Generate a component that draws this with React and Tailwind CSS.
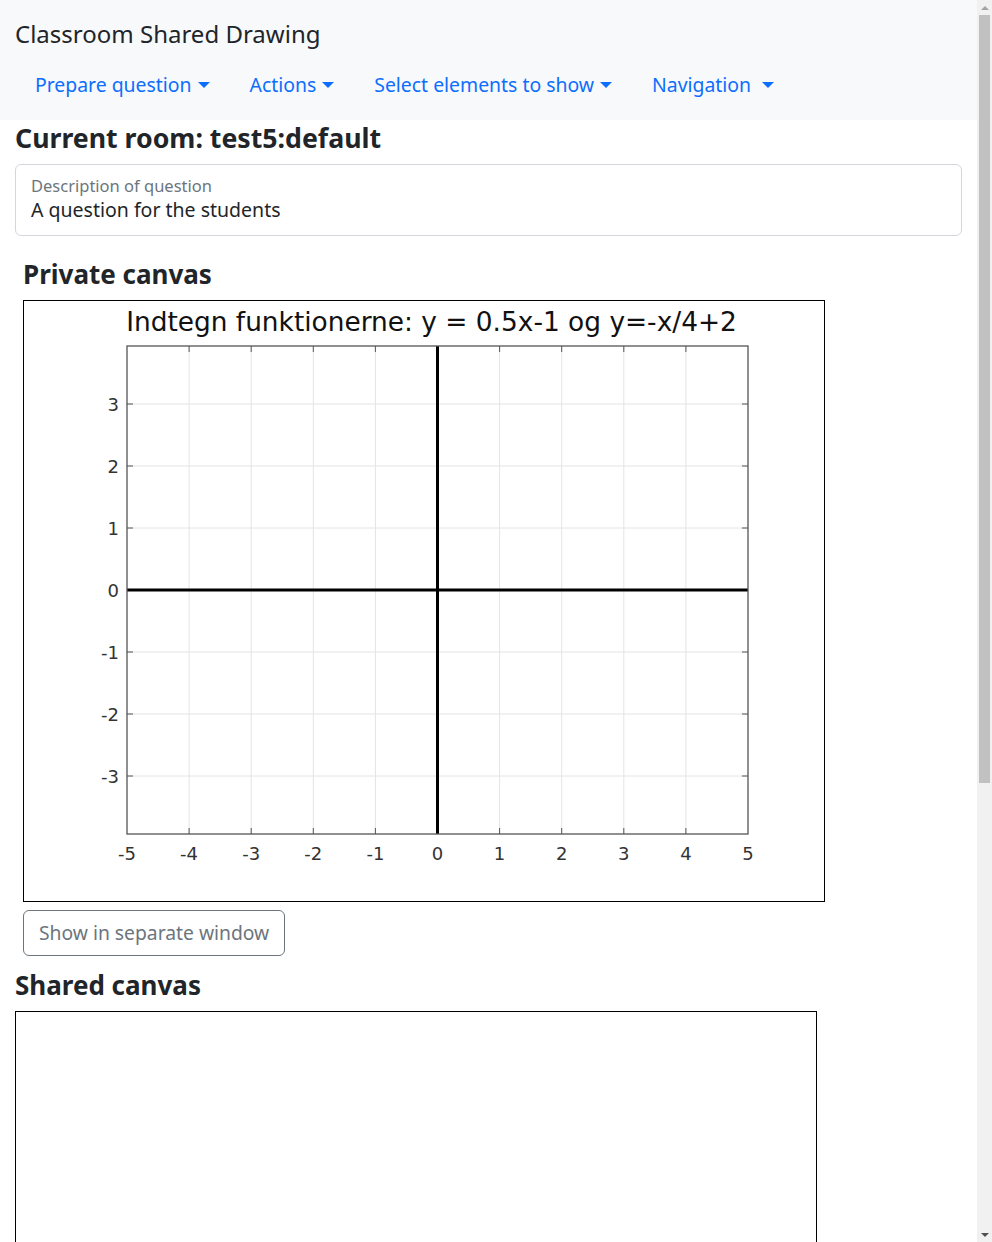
import React from 'react';

const navItems = [
  { label: 'Prepare question', spaced: false },
  { label: 'Actions', spaced: false },
  { label: 'Select elements to show', spaced: false },
  { label: 'Navigation', spaced: true },
];

const Caret = () => (
  <span className="inline-block w-0 h-0 border-t-[6px] border-t-[#0d6efd] border-x-[6px] border-x-transparent align-middle" />
);

// plot geometry (inner canvas coords, 800x600)
const X0 = 103;
const X1 = 724;
const Y0 = 45;
const Y1 = 533;
const UX = (X1 - X0) / 10;
const OX = (X0 + X1) / 2;
const OY = (Y0 + Y1) / 2;
const UY = 62;

const xs = [-5, -4, -3, -2, -1, 0, 1, 2, 3, 4, 5];
const ys = [3, 2, 1, 0, -1, -2, -3];

const Plot = () => (
  <svg width="800" height="600" viewBox="0 0 800 600" className="block">
    <text
      x="407.5"
      y="30"
      textAnchor="middle"
      fontFamily="DejaVu Sans, sans-serif"
      fontSize="26.4"
      fill="#111"
    >
      Indtegn funktionerne: y = 0.5x-1 og y=-x/4+2
    </text>

    {/* grid */}
    {xs.slice(1, -1).map((v) => (
      <line key={'gx' + v} x1={OX + v * UX} x2={OX + v * UX} y1={Y0} y2={Y1} stroke="#e4e4e4" strokeWidth="1" />
    ))}
    {ys.map((v) => (
      <line key={'gy' + v} x1={X0} x2={X1} y1={OY - v * UY} y2={OY - v * UY} stroke="#e4e4e4" strokeWidth="1" />
    ))}

    {/* ticks */}
    {xs.slice(1, -1).map((v) => (
      <g key={'tx' + v} stroke="#555" strokeWidth="1">
        <line x1={OX + v * UX} x2={OX + v * UX} y1={Y1} y2={Y1 - 6} />
        <line x1={OX + v * UX} x2={OX + v * UX} y1={Y0} y2={Y0 + 6} />
      </g>
    ))}
    {ys.map((v) => (
      <g key={'ty' + v} stroke="#555" strokeWidth="1">
        <line x1={X0} x2={X0 + 6} y1={OY - v * UY} y2={OY - v * UY} />
        <line x1={X1} x2={X1 - 6} y1={OY - v * UY} y2={OY - v * UY} />
      </g>
    ))}

    {/* axes */}
    <line x1={X0} x2={X1} y1={OY} y2={OY} stroke="#000" strokeWidth="3" />
    <line x1={OX} x2={OX} y1={Y0} y2={Y1} stroke="#000" strokeWidth="3" />

    {/* frame */}
    <rect x={X0} y={Y0} width={X1 - X0} height={Y1 - Y0} fill="none" stroke="#555" strokeWidth="1.3" />

    {/* labels */}
    {xs.map((v) => (
      <text
        key={'lx' + v}
        x={OX + v * UX}
        y="559"
        textAnchor="middle"
        fontFamily="DejaVu Sans, sans-serif"
        fontSize="18"
        fill="#333"
      >
        {v}
      </text>
    ))}
    {ys.map((v) => (
      <text
        key={'ly' + v}
        x="95"
        y={OY - v * UY + 6.5}
        textAnchor="end"
        fontFamily="DejaVu Sans, sans-serif"
        fontSize="18"
        fill="#333"
      >
        {v}
      </text>
    ))}
  </svg>
);

// the window's scrollbar, as seen in the page
const Scrollbar = () => (
  <div className="w-[15px] shrink-0 h-screen bg-[#f1f1f1] flex flex-col items-center">
    <div className="h-[15px] flex items-center justify-center">
      <span className="w-0 h-0 border-b-[4px] border-b-[#a3a3a3] border-x-[4px] border-x-transparent" />
    </div>
    <div className="flex-1 w-full px-[2px]">
      <div className="h-[768px] bg-[#c1c1c1]" />
    </div>
    <div className="h-[15px] flex items-center justify-center">
      <span className="w-0 h-0 border-t-[4px] border-t-[#505050] border-x-[4px] border-x-transparent" />
    </div>
  </div>
);

export default function App() {
  return (
    <div className="flex h-screen overflow-hidden bg-white text-[#212529] font-['Noto_Sans',sans-serif]">
      <div className="flex-1 min-w-0 overflow-y-auto">
        <nav className="bg-[#f8f9fa] h-[120px] px-[15px]">
          <div className="pt-[18px] text-[24px] leading-[32px]">Classroom Shared Drawing</div>
          <ul className="flex mt-[20px]">
            {navItems.map((item) => (
              <li key={item.label}>
                <a href="#" className="flex items-center px-5 text-[19.4px] leading-[30px] text-[#0d6efd]">
                  <span>{item.label}</span>
                  <span className={item.spaced ? 'ml-[11px] flex' : 'ml-[6px] flex'}>
                    <Caret />
                  </span>
                </a>
              </li>
            ))}
          </ul>
        </nav>

        <main className="px-[15px] pb-[355px]">
          <h3 className="mt-px text-[26.7px] leading-[34px] font-bold">Current room: test5:default</h3>

          <div className="mt-[9px] border border-[#d3d7dc] rounded-[6px] px-[15px] pt-[9px] pb-[13px]">
            <div className="text-[16.5px] leading-[24px] text-[#6c757d]">Description of question</div>
            <div className="text-[19.5px] leading-[24px]">A question for the students</div>
          </div>

          <section className="px-2">
            <h4 className="mt-[22px] text-[26px] leading-[32px] font-bold">Private canvas</h4>
            <div className="mt-[10px] w-[802px] border border-black">
              <Plot />
            </div>
            <button className="mt-[8px] border border-[#6c757d] rounded-[6px] px-[15px] py-[7px] text-[19.3px] leading-[30px] text-[#6c757d] bg-white">
              Show in separate window
            </button>
          </section>

          <h4 className="mt-[13px] text-[26px] leading-[32px] font-bold">Shared canvas</h4>
          <div className="mt-[10px] w-[802px] h-[602px] border border-black bg-white" />
        </main>
      </div>
      <Scrollbar />
    </div>
  );
}
